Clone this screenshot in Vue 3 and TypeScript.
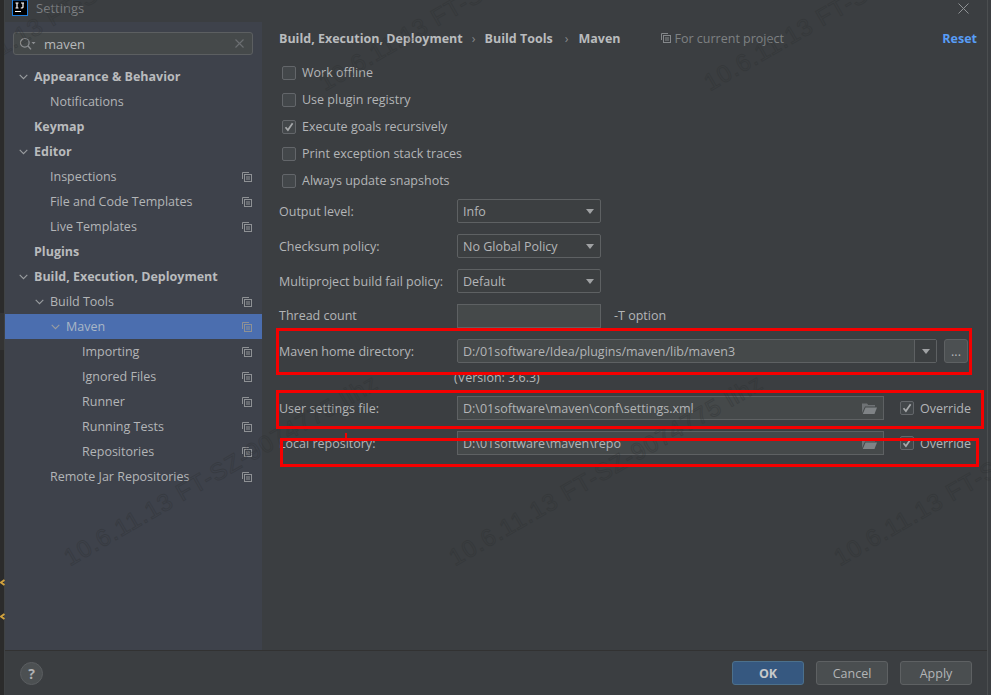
<script setup lang="ts">
interface TreeRow { label: string; indent: number; bold?: boolean; arrow?: boolean; copy?: boolean; selected?: boolean }
const tree: TreeRow[] = [
  { label: 'Appearance & Behavior', indent: 0, bold: true, arrow: true },
  { label: 'Notifications', indent: 1 },
  { label: 'Keymap', indent: 0, bold: true },
  { label: 'Editor', indent: 0, bold: true, arrow: true },
  { label: 'Inspections', indent: 1, copy: true },
  { label: 'File and Code Templates', indent: 1, copy: true },
  { label: 'Live Templates', indent: 1, copy: true },
  { label: 'Plugins', indent: 0, bold: true },
  { label: 'Build, Execution, Deployment', indent: 0, bold: true, arrow: true },
  { label: 'Build Tools', indent: 1, arrow: true, copy: true },
  { label: 'Maven', indent: 2, arrow: true, copy: true, selected: true },
  { label: 'Importing', indent: 3, copy: true },
  { label: 'Ignored Files', indent: 3, copy: true },
  { label: 'Runner', indent: 3, copy: true },
  { label: 'Running Tests', indent: 3, copy: true },
  { label: 'Repositories', indent: 3, copy: true },
  { label: 'Remote Jar Repositories', indent: 1, copy: true },
]
const checks = [
  { label: 'Work offline', on: false },
  { label: 'Use plugin registry', on: false },
  { label: 'Execute goals recursively', on: true },
  { label: 'Print exception stack traces', on: false },
  { label: 'Always update snapshots', on: false },
]
const selects = [
  { label: 'Output level:', value: 'Info' },
  { label: 'Checksum policy:', value: 'No Global Policy' },
  { label: 'Multiproject build fail policy:', value: 'Default' },
]
const paths = [
  { label: 'User settings file:', value: 'D:\\01software\\maven\\conf\\settings.xml' },
  { label: 'Local repository:', value: 'D:\\01software\\maven\\repo' },
]
const marks = [
  { x: -313, y: 570 }, { x: 72, y: 570 }, { x: 457, y: 570 }, { x: 842, y: 570 },
  { x: -58, y: 95 }, { x: 327, y: 95 }, { x: 712, y: 95 },
]
const indentPx = (n: number) => `${13 + n * 16}px`
</script>

<template>
  <div class="screen">
    <div class="backdrop">
      <div class="patch"></div>
      <svg class="chev chev-a" width="5" height="7" viewBox="0 0 5 7"><path d="M4.5 1L1 3.5 4.5 6" fill="none" stroke="#d2a23e" stroke-width="2" /></svg>
      <svg class="chev chev-b" width="5" height="7" viewBox="0 0 5 7"><path d="M4.5 1L1 3.5 4.5 6" fill="none" stroke="#d2a23e" stroke-width="2" /></svg>
    </div>
    <div class="dialog">
      <header class="titlebar">
        <svg class="logo" width="16" height="16" viewBox="0 0 16 16">
          <rect x="0.5" y="0" width="15" height="15.5" fill="#000" stroke="#1e7fe0" stroke-width="1" />
          <path d="M3.5 3h3M5 3v5M3.5 8h3M9 3h3M11 3v4.2c0 .8-1.2 1-2.2.6M3 11.5h6" fill="none" stroke="#fff" stroke-width="1.2" />
        </svg>
        <span class="title">Settings</span>
        <svg class="close" width="11" height="11" viewBox="0 0 11 11">
          <path d="M.5.5l10 10M10.5.5l-10 10" stroke="#8f9295" stroke-width="1" fill="none" />
        </svg>
      </header>

      <div class="content">
        <aside class="sidebar">
          <div class="search">
            <svg width="17" height="14" viewBox="0 0 17 14">
              <circle cx="5.8" cy="5.8" r="4.3" fill="none" stroke="#8c8f92" stroke-width="1.2" />
              <path d="M9 9l3 3.4" stroke="#8c8f92" stroke-width="1.4" />
              <path d="M12.5 5h4l-2 2.2z" fill="#8c8f92" />
            </svg>
            <span class="search-text">maven</span>
            <svg class="clear" width="9" height="9" viewBox="0 0 9 9">
              <path d="M.5.5l8 8M8.5.5l-8 8" stroke="#6c6f72" stroke-width="1.1" fill="none" />
            </svg>
          </div>
          <ul class="tree">
            <li
              v-for="row in tree"
              :key="row.label"
              class="tree-row"
              :class="{ selected: row.selected, bold: row.bold }"
              :style="{ paddingLeft: indentPx(row.indent) }"
            >
              <span class="arrow">
                <svg v-if="row.arrow" width="9" height="6" viewBox="0 0 9 6">
                  <path d="M.7.8L4.5 4.6 8.3.8" fill="none" stroke="#9a9da0" stroke-width="1.1" />
                </svg>
              </span>
              <span class="tree-label">{{ row.label }}</span>
              <svg v-if="row.copy" class="copy" width="10" height="10" viewBox="0 0 10 10">
                <path d="M.5 7V.5H7" fill="none" stroke="#8e9194" />
                <rect x="2.5" y="2.5" width="7" height="7" fill="none" stroke="#8e9194" />
                <path d="M4 5h4M4 7h4" stroke="#8e9194" />
              </svg>
            </li>
          </ul>
        </aside>

        <main class="main">
          <div class="crumbs">
            <b>Build, Execution, Deployment</b><i>›</i><b>Build Tools</b><i class="second">›</i><b>Maven</b>
            <span class="scope">
              <svg width="10" height="10" viewBox="0 0 10 10">
                <path d="M.5 7V.5H7" fill="none" stroke="#85888b" />
                <rect x="2.5" y="2.5" width="7" height="7" fill="none" stroke="#85888b" />
                <path d="M4 5h4M4 7h4" stroke="#85888b" />
              </svg>
              For current project
            </span>
            <b class="reset">Reset</b>
          </div>

          <div class="checks">
            <label v-for="c in checks" :key="c.label" class="check">
              <span class="box">
                <svg v-if="c.on" width="10" height="10" viewBox="0 0 10 10">
                  <path d="M1.5 5.2l2.4 2.8L8.6 1.2" fill="none" stroke="#a7a9ab" stroke-width="1.7" />
                </svg>
              </span>
              {{ c.label }}
            </label>
          </div>

          <div class="form">
            <div v-for="s in selects" :key="s.label" class="form-row select-row">
              <span class="label">{{ s.label }}</span>
              <div class="select">
                <span>{{ s.value }}</span>
                <span class="tri"></span>
              </div>
            </div>

            <div class="form-row thread-row">
              <span class="label">Thread count</span>
              <div class="input thread"></div>
              <span class="t-option">-T option</span>
            </div>

            <div class="form-row home-row">
              <span class="label">Maven home directory:</span>
              <div class="combo">
                <span class="combo-text">D:/01software/Idea/plugins/maven/lib/maven3</span>
                <span class="combo-btn"><span class="tri"></span></span>
              </div>
              <div class="more">...</div>
            </div>
            <div class="version">(Version: 3.6.3)</div>

            <div v-for="p in paths" :key="p.label" class="form-row path-row">
              <span class="label">{{ p.label }}</span>
              <div class="input path">
                <span>{{ p.value }}</span>
                <svg width="15" height="12" viewBox="0 0 15 12">
                  <path d="M0 1.5h5l1.2 1.5H13v1.5H3L0 11z" fill="#6e7275" />
                  <path d="M3.5 5.5H15L12.5 12H.8z" fill="#7f8386" />
                </svg>
              </div>
              <label class="check override">
                <span class="box">
                  <svg width="10" height="10" viewBox="0 0 10 10">
                    <path d="M1.5 5.2l2.4 2.8L8.6 1.2" fill="none" stroke="#a7a9ab" stroke-width="1.7" />
                  </svg>
                </span>
                Override
              </label>
            </div>
          </div>
        </main>
      </div>

      <footer class="footer">
        <div class="help">?</div>
        <div class="buttons">
          <button class="btn primary">OK</button>
          <button class="btn">Cancel</button>
          <button class="btn">Apply</button>
        </div>
      </footer>
    </div>

    <div class="watermarks" aria-hidden="true">
      <span v-for="(m, i) in marks" :key="i" class="mark" :style="{ left: m.x + 'px', top: m.y + 'px' }">10.6.11.13 FT-SZ-9074775 lihz</span>
    </div>

    <div class="red r1"></div>
    <div class="red r2"></div>
    <div class="red r3"></div>
    <div class="red-tick"></div>
  </div>
</template>

<style>
html, body { margin: 0; background: #3b3e41; }
</style>

<style scoped>
.screen {
  position: relative;
  width: 991px;
  height: 695px;
  overflow: hidden;
  display: flex;
  font-family: "Open Sans", "Noto Sans", sans-serif;
  font-size: 12.5px;
  color: #b3b5b7;
  background: #3b3e41;
}
.backdrop {
  position: relative;
  width: 4px;
  flex: none;
  background: #2b2b2b;
}
.patch { position: absolute; left: 0; right: 0; top: 313px; height: 37px; background: #343434; }
.chev { position: absolute; left: 0; }
.chev-a { top: 579px; }
.chev-b { top: 613px; }
.dialog {
  flex: 1;
  display: flex;
  flex-direction: column;
  background: #3b3e41;
  border-left: 1px solid #3f4244;
  border-right: 1px solid #4b4e50;
  margin-right: 3px;
  min-width: 0;
}
.titlebar {
  height: 22px;
  flex: none;
  display: flex;
  align-items: flex-start;
  padding-left: 7px;
  padding-right: 18px;
}
.logo { display: block; }
.title { margin-left: 8px; margin-top: -1px; line-height: 18px; color: #7c7f82; font-size: 13px; }
.close { margin-left: auto; margin-top: 3px; }
.content { flex: 1; display: flex; min-height: 0; }
.sidebar {
  width: 257px;
  flex: none;
  background: #3e424b;
  padding-top: 10px;
  box-sizing: border-box;
}
.search {
  margin-left: 8px;
  width: 240px;
  height: 23px;
  box-sizing: border-box;
  display: flex;
  align-items: center;
  padding: 0 8px 0 5px;
  background: #45494a;
  border: 1px solid #5c5f61;
  border-radius: 3px;
}
.search-text { margin-left: 8px; color: #b7b9bb; font-size: 13px; }
.clear { margin-left: auto; }
.tree { list-style: none; margin: 9px 0 0; padding: 0; }
.tree-row {
  height: 25px;
  display: flex;
  align-items: center;
  box-sizing: border-box;
  padding-right: 10px;
  line-height: 25px;
}
.tree-row.bold .tree-label { font-weight: 700; color: #b9bbbd; }
.tree-row.selected { background: #4b6eaf; }
.tree-row.selected .tree-label { color: #a9b7c6; }
.arrow { width: 16px; flex: none; display: flex; align-items: center; padding-left: 1px; box-sizing: border-box; }
.tree-label { white-space: nowrap; }
.copy { margin-left: auto; }

.main { flex: 1; min-width: 0; padding-left: 17px; padding-right: 10px; box-sizing: border-box; }
.crumbs {
  height: 32px;
  display: flex;
  align-items: center;
  color: #b9bbbd;
}
.crumbs b { font-weight: 700; white-space: nowrap; }
.crumbs i { font-style: normal; margin: 0 9px; color: #85888b; }
.crumbs i.second { margin-left: 12px; margin-right: 10px; }
.scope { margin-left: 40px; display: flex; align-items: center; gap: 4px; color: #7e8183; white-space: nowrap; }
.crumbs .reset { margin-left: auto; color: #589df6; }

.checks { margin-top: 5px; padding-left: 3px; display: flex; flex-direction: column; }
.check { display: flex; align-items: center; gap: 6px; height: 27px; white-space: nowrap; }
.box {
  width: 14px;
  height: 14px;
  box-sizing: border-box;
  flex: none;
  display: flex;
  align-items: center;
  justify-content: center;
  background: #43474a;
  border: 1px solid #63666a;
  border-radius: 2px;
}

.form { margin-top: 5px; display: flex; flex-direction: column; }
.form-row { display: flex; align-items: center; }
.label { width: 178px; flex: none; white-space: nowrap; }
.select-row { height: 24px; margin-bottom: 11px; }
.select {
  width: 144px;
  height: 24px;
  box-sizing: border-box;
  display: flex;
  align-items: center;
  justify-content: space-between;
  padding: 0 6px 0 5px;
  border: 1px solid #5e6163;
  border-radius: 2px;
  background: #3c3f41;
}
.tri {
  width: 0;
  height: 0;
  border-left: 4.5px solid transparent;
  border-right: 4.5px solid transparent;
  border-top: 5px solid #a0a2a4;
  display: block;
}
.input {
  height: 24px;
  box-sizing: border-box;
  display: flex;
  align-items: center;
  justify-content: space-between;
  padding: 0 5px;
  background: #45494a;
  border: 1px solid #5e6163;
}
.thread { width: 144px; }
.thread-row { height: 24px; margin-bottom: 11px; }
.thread-row .label, .t-option { padding-bottom: 2px; }
.t-option { margin-left: 13px; }
.home-row { height: 24px; }
.combo {
  width: 480px;
  height: 24px;
  box-sizing: border-box;
  display: flex;
  align-items: center;
  background: #45494a;
  border: 1px solid #5e6163;
  border-radius: 2px;
}
.combo-text { flex: 1; padding-left: 5px; white-space: nowrap; }
.combo-btn {
  width: 21px;
  height: 100%;
  display: flex;
  align-items: center;
  justify-content: center;
  border-left: 1px solid #5e6163;
  background: #3c3f41;
}
.more {
  margin-left: 7px;
  width: 24px;
  height: 24px;
  box-sizing: border-box;
  background: #4c5052;
  border: 1px solid #5e6163;
  border-radius: 3px;
  text-align: center;
  line-height: 24px;
}
.version { margin: 5px 0 10px 175px; height: 18px; line-height: 20px; }
.path-row { height: 24px; margin-bottom: 11px; }
.path { width: 427px; padding-right: 6px; }
.override { margin-left: 16px; }

.footer {
  height: 45px;
  flex: none;
  display: flex;
  align-items: center;
  justify-content: space-between;
  box-sizing: border-box;
  border-top: 1px solid #323232;
  padding: 0 15px;
}
.help {
  width: 23px;
  height: 23px;
  border-radius: 50%;
  background: #4c5052;
  border: 1px solid #5a5d60;
  box-sizing: border-box;
  text-align: center;
  line-height: 21px;
  font-weight: 700;
  font-size: 14px;
  color: #b0b2b4;
}
.buttons { display: flex; gap: 12px; }
.btn {
  width: 72px;
  height: 24px;
  box-sizing: border-box;
  padding: 0;
  font: inherit;
  color: #b3b5b7;
  background: #4a4e50;
  border: 1px solid #5e6163;
  border-radius: 3px;
}
.btn.primary { background: #365880; border-color: #4c708c; color: #c6c8ca; font-weight: 700; }

.watermarks { position: absolute; inset: 0; overflow: hidden; pointer-events: none; }
.mark {
  position: absolute;
  white-space: nowrap;
  font-family: "Liberation Sans", sans-serif;
  font-size: 24px;
  letter-spacing: 1px;
  line-height: 1;
  color: transparent;
  -webkit-text-stroke: 1px rgba(44, 46, 48, 0.34);
  transform-origin: 0 100%;
  transform: translateY(-24px) rotate(-30deg);
}
.red { position: absolute; box-sizing: border-box; border: 3px solid #f50000; pointer-events: none; }
.r1 { left: 276px; top: 328px; width: 696px; height: 47px; }
.r2 { left: 276px; top: 390px; width: 708px; height: 39px; }
.r3 { left: 280px; top: 438px; width: 699px; height: 29px; }
.red-tick { position: absolute; left: 345px; top: 433px; width: 2px; height: 5px; background: #f50000; }
</style>
